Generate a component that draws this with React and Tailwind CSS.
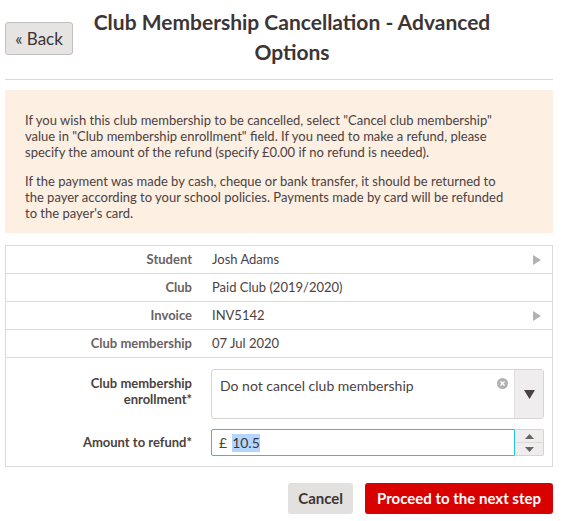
const rows = [
  { label: "Student", value: "Josh Adams", arrow: true },
  { label: "Club", value: "Paid Club (2019/2020)" },
  { label: "Invoice", value: "INV5142", arrow: true },
  { label: "Club membership", value: "07 Jul 2020" },
];

const Arrow = () => (
  <svg width="8" height="10" viewBox="0 0 8 10" className="shrink-0">
    <path d="M0 0 L8 5 L0 10 Z" fill="#b3b0b0" />
  </svg>
);

const App = () => {
  return (
    <div
      className="w-[566px] h-[521px] bg-white text-[#4a4242] pl-[5px] pr-[13px]"
      style={{ fontFamily: "Lato, 'Liberation Sans', sans-serif" }}
    >
      {/* HEADER */}
      <div className="flex items-start pt-[7px] pb-[12px]">
        <button className="mt-[15px] w-[68px] h-[33px] shrink-0 rounded-[3px] border border-[#c4bfbf] bg-[#e6e3e3] text-[#3b3333] text-[17px]">
          « Back
        </button>
        <h1 className="flex-1 pr-[42px] text-center text-[21px] leading-[30px] font-bold text-[#3d3535]">
          Club Membership Cancellation - Advanced
          <br />
          Options
        </h1>
      </div>
      <div className="border-t border-[#dcd9d9]" />

      {/* INFO BOX */}
      <div className="mt-[10px] bg-[#fdefe2] pl-[20px] pr-[10px] pt-[22px] pb-[12px] text-[13px] leading-[16px] text-[#4a4242]">
        <p>
          If you wish this club membership to be cancelled, select "Cancel club membership"
          <br />
          value in "Club membership enrollment" field. If you need to make a refund, please
          <br />
          specify the amount of the refund (specify £0.00 if no refund is needed).
        </p>
        <p className="mt-[13px]">
          If the payment was made by cash, cheque or bank transfer, it should be returned to
          <br />
          the payer according to your school policies. Payments made by card will be refunded
          <br />
          to the payer's card.
        </p>
      </div>

      {/* TABLE */}
      <div className="mt-[12px] border border-[#dcd9d9] text-[13px]">
        {rows.map((row) => (
          <div key={row.label} className="flex items-center h-[28px] border-b border-[#dcd9d9]">
            <div className="w-[186px] text-right font-bold text-[#6b6262]">{row.label}</div>
            <div className="flex-1 pl-[20px] text-[#4a4242]">{row.value}</div>
            <div className="w-[19px]">{row.arrow && <Arrow />}</div>
          </div>
        ))}

        <div className="flex pt-[11px]">
          <div className="w-[186px] pt-[6px] text-right font-bold text-[#4a4242] leading-[16px]">
            Club membership
            <br />
            enrollment*
          </div>
          <div className="ml-[19px] w-[333px] h-[50px] flex border border-[#d6d3d3] rounded-[3px]">
            <div className="flex-1 flex items-start justify-between pl-[8px] pr-[6px] pt-[5px]">
              <span className="text-[14px] text-[#4a4242]">Do not cancel club membership</span>
              <svg width="11" height="11" viewBox="0 0 12 12" className="mt-[3px]">
                <circle cx="6" cy="6" r="6" fill="#b3b0b0" />
                <path d="M3.8 3.8 L8.2 8.2 M8.2 3.8 L3.8 8.2" stroke="#fff" strokeWidth="1.6" />
              </svg>
            </div>
            <div className="w-[29px] bg-[#efeded] border-l border-[#e0dddd] flex items-center justify-center">
              <svg width="11" height="9" viewBox="0 0 11 9">
                <path d="M0 0 L11 0 L5.5 9 Z" fill="#4a4242" />
              </svg>
            </div>
          </div>
        </div>

        <div className="flex items-center pt-[10px] pb-[10px]">
          <div className="w-[186px] text-right font-bold text-[#4a4242]">Amount to refund*</div>
          <div className="ml-[19px] w-[333px] h-[27px] flex">
            <div className="flex-1 flex items-center border border-[#22c3e6] rounded-l-[2px] pl-[7px]">
              <span className="text-[14px] text-[#4a4242] mr-[5px]">£</span>
              <span className="text-[14px] text-[#3d3535] bg-[#b4d5fe] leading-[18px]">10.5</span>
            </div>
            <div className="w-[29px] flex flex-col bg-[#efeded] border border-l-0 border-[#d6d3d3] rounded-r-[2px]">
              <div className="flex-1 flex items-center justify-center border-b border-[#dcd9d9]">
                <svg width="9" height="5" viewBox="0 0 9 5">
                  <path d="M0 5 L4.5 0 L9 5 Z" fill="#6b6262" />
                </svg>
              </div>
              <div className="flex-1 flex items-center justify-center">
                <svg width="9" height="5" viewBox="0 0 9 5">
                  <path d="M0 0 L9 0 L4.5 5 Z" fill="#6b6262" />
                </svg>
              </div>
            </div>
          </div>
        </div>
      </div>

      {/* FOOTER */}
      <div className="mt-[16px] flex justify-end gap-[12px]">
        <button className="h-[31px] px-[10px] rounded-[3px] bg-[#e3e0e0] text-[15px] font-bold text-[#3d3535]">
          Cancel
        </button>
        <button className="h-[31px] px-[12px] rounded-[3px] bg-[#d90000] text-[15px] font-bold text-white">
          Proceed to the next step
        </button>
      </div>
    </div>
  );
};

export default App;
